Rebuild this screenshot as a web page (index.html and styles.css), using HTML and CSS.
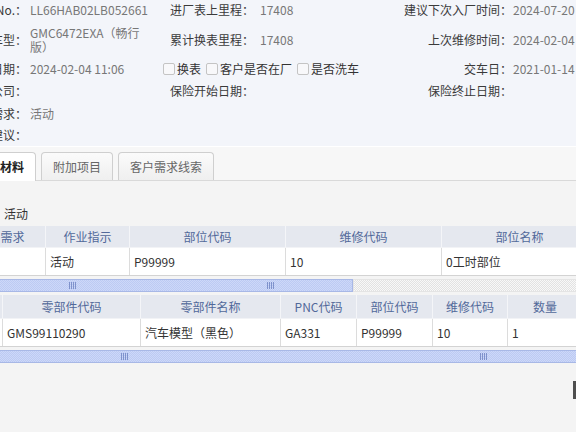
FILE: index.html
```html
<!DOCTYPE html>
<html lang="zh-CN">
    <head>
        <title>维修工单</title>
        <meta charset="UTF-8">
        <link rel="stylesheet" href="styles.css">
    </head>
    <body>
        <div class="page">

            <div class="info">
                <div class="lbl">车架No.：</div>
                <div class="val val-first">LL66HAB02LB052661</div>
                <div class="lbl2">进厂表上里程：</div>
                <div class="val">17408</div>
                <div class="lbl">建议下次入厂时间：</div>
                <div class="val">2024-07-20</div>

                <div class="lbl">车型：</div>
                <div class="val val-first val-wrap">GMC6472EXA（畅行版）</div>
                <div class="lbl2">累计换表里程：</div>
                <div class="val">17408</div>
                <div class="lbl">上次维修时间：</div>
                <div class="val">2024-02-04</div>

                <div class="lbl">开单日期：</div>
                <div class="val val-first">2024-02-04 11:06</div>
                <div class="checks">
                    <label class="chk"><span class="box"></span>换表</label>
                    <label class="chk"><span class="box"></span>客户是否在厂</label>
                    <label class="chk"><span class="box"></span>是否洗车</label>
                </div>
                <div class="lbl">交车日：</div>
                <div class="val">2021-01-14</div>

                <div class="lbl">保险公司：</div>
                <div class="val val-first"></div>
                <div class="lbl2">保险开始日期：</div>
                <div class="val"></div>
                <div class="lbl">保险终止日期：</div>
                <div class="val"></div>

                <div class="lbl">客户需求：</div>
                <div class="val val-first">活动</div>
                <div class="empty"></div>

                <div class="lbl">维修建议：</div>
                <div class="val val-first"></div>
                <div class="empty"></div>
            </div>

            <div class="tabs">
                <div class="tab tab-on">工时材料</div>
                <div class="tab">附加项目</div>
                <div class="tab">客户需求线索</div>
            </div>

            <div class="panel">
                <div class="note">需求：活动</div>

                <div class="grid grid-one">
                    <div class="grid-head">
                        <div>客户需求</div>
                        <div>作业指示</div>
                        <div>部位代码</div>
                        <div>维修代码</div>
                        <div>部位名称</div>
                    </div>
                    <div class="grid-row">
                        <div></div>
                        <div>活动</div>
                        <div>P99999</div>
                        <div>10</div>
                        <div>0工时部位</div>
                    </div>
                </div>
                <div class="scroll scroll-one">
                    <div class="thumb thumb-a"><span class="grip"></span></div>
                    <div class="thumb thumb-b"><span class="grip"></span></div>
                    <div class="track"></div>
                </div>

                <div class="grid grid-two">
                    <div class="grid-head">
                        <div></div>
                        <div>零部件代码</div>
                        <div>零部件名称</div>
                        <div>PNC代码</div>
                        <div>部位代码</div>
                        <div>维修代码</div>
                        <div>数量</div>
                    </div>
                    <div class="grid-row">
                        <div></div>
                        <div>GMS99110290</div>
                        <div>汽车模型（黑色）</div>
                        <div>GA331</div>
                        <div>P99999</div>
                        <div>10</div>
                        <div>1</div>
                    </div>
                </div>
                <div class="scroll scroll-two">
                    <div class="thumb thumb-c"><span class="grip"></span></div>
                    <div class="thumb thumb-d"><span class="grip"></span></div>
                </div>
            </div>

        </div>

        <div class="edge"></div>
    </body>
</html>
```

FILE: styles.css
```css
body{
    margin: 0;
    width: 576px;
    height: 432px;
    overflow: hidden;
    background: #fff;
    color: #333;
    font-family: "Noto Sans CJK SC", sans-serif;
    font-size: 12px;
}

/* the page is wider than the window, its left part is off screen */
.page{
    margin-left: -44px;
    width: 720px;
}

/* top info block */
.info{
    display: grid;
    grid-template-columns: 71px 143px 89px 116px 137px 164px;
    grid-template-rows: 19px 41px 18px 26px 20px 22px;
    align-items: center;
    height: 146px;
    line-height: 14px;
    background: #f3f5fa;
    border-bottom: 1px solid #fff;
}

.lbl{
    text-align: right;
    white-space: nowrap;
    color: #3a3a3a;
}

.lbl2{
    white-space: nowrap;
    color: #3a3a3a;
}

.val{
    padding-left: 1px;
    color: #777;
    white-space: nowrap;
}

.val-first{
    padding-left: 3px;
}

.val-wrap{
    white-space: normal;
    padding-right: 24px;
}

.empty{
    grid-column: 3 / 7;
}

.checks{
    grid-column: 3 / 5;
    display: flex;
    margin-left: -7px;
    gap: 5px;
    white-space: nowrap;
}

.chk{
    display: flex;
    align-items: center;
    color: #333;
}

.box{
    display: inline-block;
    width: 10px;
    height: 10px;
    margin-right: 2px;
    border: 1px solid #c4c4c4;
    border-radius: 2px;
    background: #f8f8fa;
}

/* tabs */
.tabs{
    display: flex;
    gap: 5px;
    height: 28px;
    padding: 5px 0 0 8px;
    background: #f7f7f7;
    border-bottom: 1px solid #d9d9d9;
}

.tab{
    height: 27px;
    line-height: 27px;
    padding: 0 11px;
    border: 1px solid #cfcfcf;
    border-bottom: none;
    border-radius: 4px 4px 0 0;
    background: linear-gradient(#fbfbfb, #efefef);
    color: #666;
}

.tab-on{
    height: 28px;
    background: #fff;
    color: #222;
    font-weight: bold;
}

/* panel under tabs */
.panel{
    background: #f4f4f4;
    padding-bottom: 70px;
}

.note{
    padding: 26px 0 5px 12px;
    line-height: 14px;
    color: #333;
}

.grid{
    background: #fff;
}

.grid-head, .grid-row{
    display: grid;
}

.grid-one .grid-head, .grid-one .grid-row{
    grid-template-columns: 90px 84px 156px 156px 156px;
}

.grid-two .grid-head, .grid-two .grid-row{
    grid-template-columns: 47px 138px 140px 76px 76px 75px 75px;
}

.grid-head{
    height: 21px;
    line-height: 21px;
    background: #e5e8ef;
    color: #52699a;
    text-align: center;
    border-bottom: 1px solid #f2f3f6;
}

.grid-head div{
    border-right: 1px solid #f4f5f8;
    white-space: nowrap;
}

.grid-row{
    height: 27px;
    line-height: 27px;
    border-bottom: 1px solid #d3d3d3;
}

.grid-row div{
    padding-left: 4px;
    border-right: 1px solid #dcdcdc;
    white-space: nowrap;
}

.grid-two .grid-head{
    height: 23px;
    line-height: 23px;
}

/* scroll bars */
.scroll{
    display: flex;
    height: 13px;
    margin: 3px 0 3px;
    background: #fff;
}

.thumb{
    display: flex;
    align-items: center;
    justify-content: center;
    box-sizing: border-box;
    border: 1px solid #a8b8e6;
    background: repeating-conic-gradient(#bccaf3 0 25%, #cdd8f8 0 50%) 0 0 / 2px 2px;
}

.thumb + .thumb{
    border-left: none;
}

.track{
    flex: 1;
    border: 1px solid #e4e4e4;
    background: repeating-conic-gradient(#e2e2e2 0 25%, #f8f8f8 0 50%) 0 0 / 2px 2px;
}

.grip{
    display: inline-block;
    width: 7px;
    height: 7px;
    background: repeating-linear-gradient(90deg, #7f92cc 0 1px, transparent 1px 2px);
}

.thumb-a{ width: 232px; border-right: none; }
.thumb-b{ width: 165px; }

.thumb-c{ width: 350px; border-right: none; }
.thumb-d{ width: 402px; }

.edge{
    position: absolute;
    top: 381px;
    right: 0;
    width: 3px;
    height: 18px;
    background: #4f4f4f;
}
```
